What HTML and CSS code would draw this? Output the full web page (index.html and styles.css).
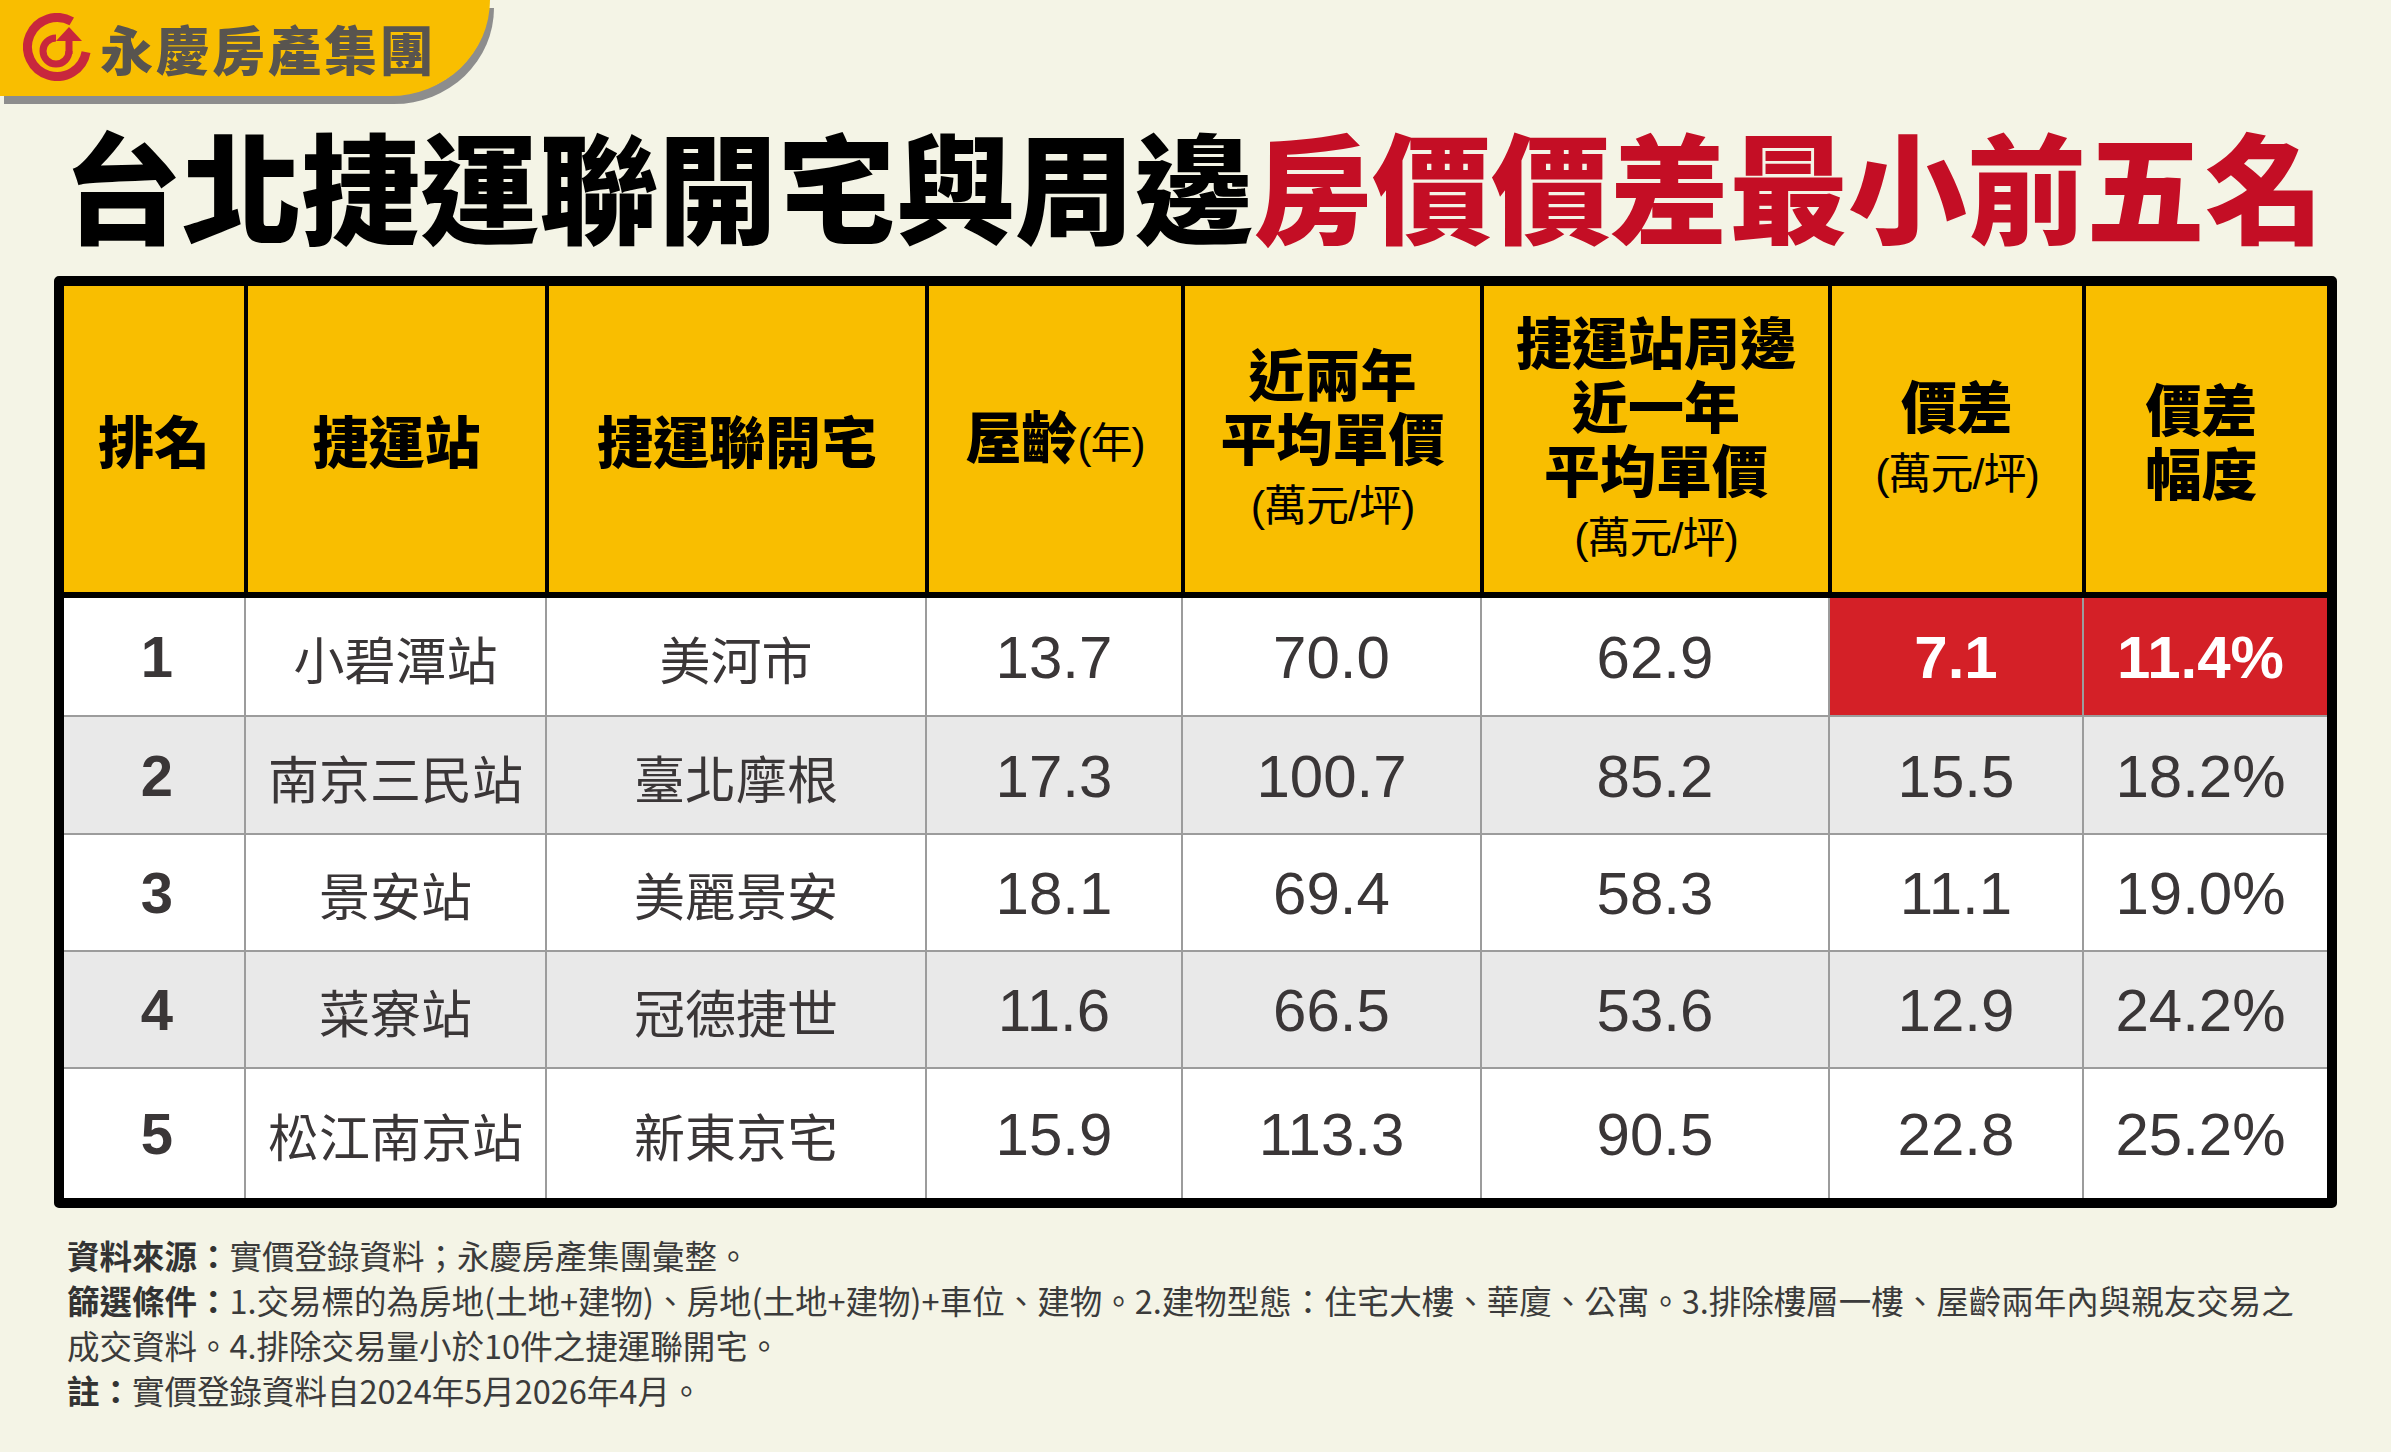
FILE: index.html
```html
<!DOCTYPE html>
<html lang="zh-Hant">
<head>
<meta charset="utf-8">
<title>台北捷運聯開宅與周邊房價價差最小前五名</title>
<link rel="stylesheet" href="styles.css">
</head>
<body>
<header class="brand">
  <svg class="logo" viewBox="0 0 68 68" width="68" height="68" aria-hidden="true">
    <path d="M63.05 39.12 A29.5 29.5 0 1 1 48.75 8.45" fill="none" stroke="#c8273d" stroke-width="9"/>
    <path d="M46 38 A13 13 0 1 1 33 25" fill="none" stroke="#c8273d" stroke-width="7"/>
    <path d="M46 41 L46 24" stroke="#c8273d" stroke-width="7"/>
    <polygon points="33,28 59,28 46,14" fill="#c8273d"/>
  </svg>
  <span class="brand-name">永慶房產集團</span>
</header>

<h1 class="title"><span class="t-black">台北捷運聯開宅與周邊</span><span class="t-red">房價價差最小前五名</span></h1>

<div class="table">
  <div class="row head">
    <div class="cell"><span>排名</span></div>
    <div class="cell"><span>捷運站</span></div>
    <div class="cell"><span>捷運聯開宅</span></div>
    <div class="cell"><span>屋齡<small class="unit-inline">(年)</small></span></div>
    <div class="cell"><span class="stack"><span class="ln">近兩年</span><span class="ln">平均單價</span><span class="ln unit">(萬元/坪)</span></span></div>
    <div class="cell"><span class="stack"><span class="ln">捷運站周邊</span><span class="ln">近一年</span><span class="ln">平均單價</span><span class="ln unit">(萬元/坪)</span></span></div>
    <div class="cell"><span class="stack"><span class="ln">價差</span><span class="ln unit">(萬元/坪)</span></span></div>
    <div class="cell last"><span class="stack"><span class="ln">價差</span><span class="ln">幅度</span></span></div>
  </div>

  <div class="row body r1">
    <div class="cell rank">1</div>
    <div class="cell zh">小碧潭站</div>
    <div class="cell zh">美河市</div>
    <div class="cell num">13.7</div>
    <div class="cell num">70.0</div>
    <div class="cell num">62.9</div>
    <div class="cell num hot">7.1</div>
    <div class="cell num hot last">11.4%</div>
  </div>

  <div class="row body r2 alt">
    <div class="cell rank">2</div>
    <div class="cell zh">南京三民站</div>
    <div class="cell zh">臺北摩根</div>
    <div class="cell num">17.3</div>
    <div class="cell num">100.7</div>
    <div class="cell num">85.2</div>
    <div class="cell num">15.5</div>
    <div class="cell num last">18.2%</div>
  </div>

  <div class="row body r3">
    <div class="cell rank">3</div>
    <div class="cell zh">景安站</div>
    <div class="cell zh">美麗景安</div>
    <div class="cell num">18.1</div>
    <div class="cell num">69.4</div>
    <div class="cell num">58.3</div>
    <div class="cell num">11.1</div>
    <div class="cell num last">19.0%</div>
  </div>

  <div class="row body r4 alt">
    <div class="cell rank">4</div>
    <div class="cell zh">菜寮站</div>
    <div class="cell zh">冠德捷世</div>
    <div class="cell num">11.6</div>
    <div class="cell num">66.5</div>
    <div class="cell num">53.6</div>
    <div class="cell num">12.9</div>
    <div class="cell num last">24.2%</div>
  </div>

  <div class="row body r5">
    <div class="cell rank">5</div>
    <div class="cell zh">松江南京站</div>
    <div class="cell zh">新東京宅</div>
    <div class="cell num">15.9</div>
    <div class="cell num">113.3</div>
    <div class="cell num">90.5</div>
    <div class="cell num">22.8</div>
    <div class="cell num last">25.2%</div>
  </div>
</div>

<footer class="notes">
  <p><b>資料來源：</b>實價登錄資料；永慶房產集團彙整。</p>
  <p><b>篩選條件：</b>1.交易標的為房地(土地+建物)、房地(土地+建物)+車位、建物。2.建物型態：住宅大樓、華廈、公寓。3.排除樓層一樓、屋齡兩年內與親友交易之</p>
  <p>成交資料。4.排除交易量小於10件之捷運聯開宅。</p>
  <p><b>註：</b>實價登錄資料自2024年5月2026年4月。</p>
</footer>
</body>
</html>
```

FILE: styles.css
```css
html, body {
  margin: 0;
  padding: 0;
}

body {
  width: 2391px;
  height: 1452px;
  background: #f4f4e6;
  font-family: "Noto Sans CJK TC", "Noto Sans", sans-serif;
  color: #000;
  overflow: hidden;
}

/* ---------- brand banner ---------- */
.brand {
  box-sizing: border-box;
  width: 490px;
  height: 96px;
  background: #f9be00;
  border-bottom-right-radius: 100px 96px;
  box-shadow: 4px 8px 0 #8d8d8d;
  display: flex;
  align-items: center;
  gap: 9px;
  padding-left: 23px;
}

.logo {
  display: block;
  flex: none;
  margin-top: -3px;
}

.brand-name {
  font-size: 53px;
  line-height: 1;
  font-weight: 900;
  letter-spacing: 3px;
  color: #58544f;
  white-space: nowrap;
}

/* ---------- title ---------- */
.title {
  margin: 28px 0 0;
  padding-left: 63px;
  font-size: 119px;
  line-height: 118px;
  font-weight: 900;
  white-space: nowrap;
  letter-spacing: 0;
}

.t-black { color: #000; }
.t-red { color: #c40e25; }

/* ---------- table ---------- */
.table {
  box-sizing: border-box;
  width: 2283px;
  margin: 34px 0 0 54px;
  border: 10px solid #000;
  border-radius: 5px;
  background: #fff;
  overflow: hidden;
}

.row {
  display: grid;
  grid-template-columns: 180px 301px 380px 256px 299px 348px 254px 245px;
}

.cell {
  box-sizing: border-box;
  display: flex;
  align-items: center;
  justify-content: center;
  text-align: center;
}

.cell.last {
  padding-right: 10px;
}

/* header */
.head {
  height: 306px;
  background: #f9be00;
  border-bottom: 6px solid #000;
}

.head .cell {
  font-size: 56px;
  line-height: 64px;
  font-weight: 900;
  color: #000;
}

.head .cell + .cell {
  border-left: 4px solid #000;
}

.stack {
  display: flex;
  flex-direction: column;
  align-items: center;
}

.ln {
  display: block;
  height: 64px;
  line-height: 64px;
  white-space: nowrap;
}

.unit {
  height: 70px;
  line-height: 76px;
  font-size: 43px;
  font-weight: 400;
  font-family: "Liberation Sans", "Noto Sans CJK TC", sans-serif;
  letter-spacing: -1px;
}

.unit-inline {
  font-size: 42px;
  font-weight: 400;
  font-family: "Liberation Sans", "Noto Sans CJK TC", sans-serif;
  letter-spacing: -1px;
}

/* body rows */
.body {
  color: #3a3637;
}

.body + .body {
  border-top: 2px solid #9c9c9c;
}

.r1 { height: 117px; }
.r2 { height: 116px; }
.r3 { height: 115px; }
.r4 { height: 115px; }
.r5 { height: 129px; }

.alt {
  background: #e9e9e9;
}

.body .cell + .cell {
  border-left: 2px solid #9c9c9c;
}

.rank {
  font-family: "Liberation Sans", Arial, sans-serif;
  font-weight: 700;
  font-size: 58px;
  padding-left: 6px;
}

.zh {
  font-family: "Noto Sans CJK TC", sans-serif;
  font-size: 51px;
  font-weight: 400;
  padding-top: 3px;
}

.num {
  font-family: "Liberation Sans", Arial, sans-serif;
  font-size: 60px;
  font-weight: 400;
  padding-top: 2px;
}

.hot {
  background: #d42027;
  color: #fff;
  font-weight: 700;
}

/* ---------- notes ---------- */
.notes {
  margin: 24px 0 0 67px;
  font-size: 32.5px;
  line-height: 45px;
  color: #3b3b3b;
}

.notes p {
  margin: 0;
  white-space: nowrap;
}

.notes b {
  font-weight: 700;
  color: #333;
}
```
